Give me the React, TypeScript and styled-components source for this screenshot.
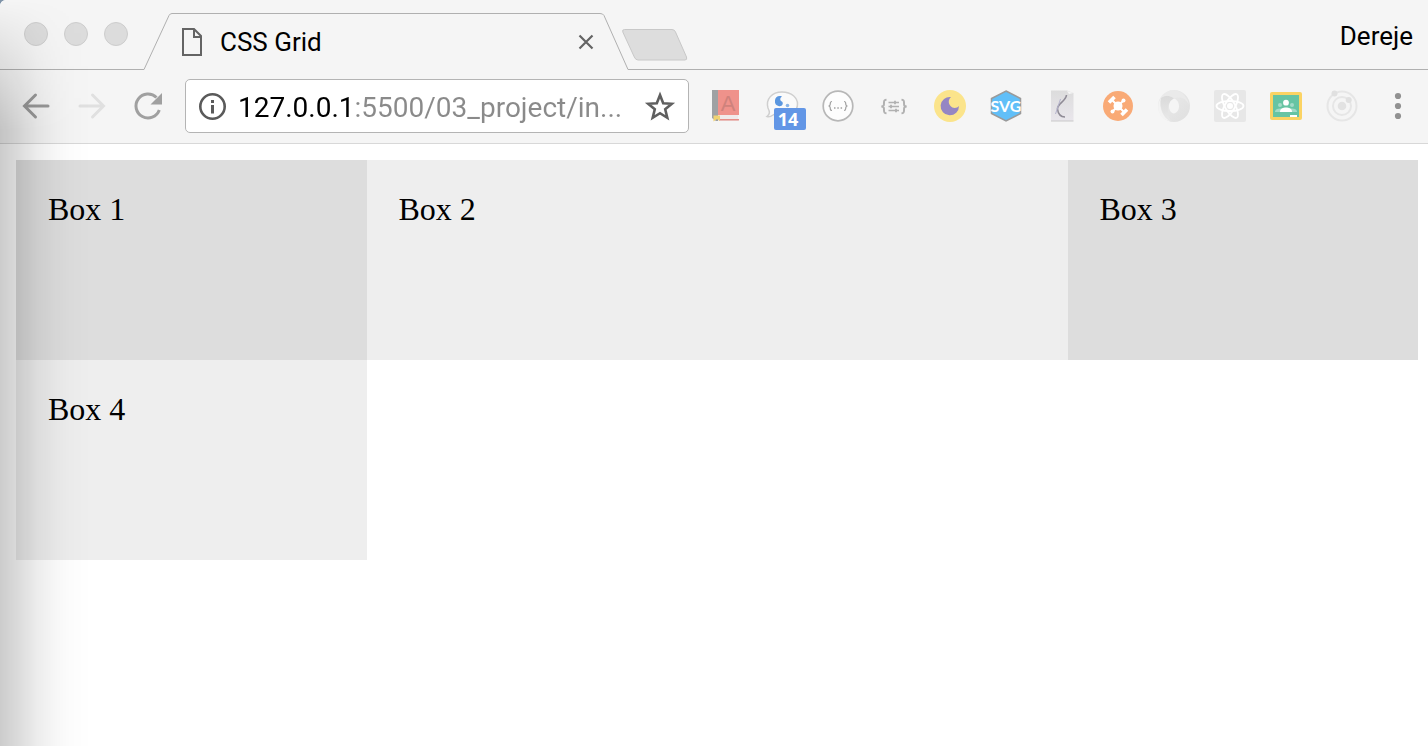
import React, { useState } from "react";
import styled, { createGlobalStyle } from "styled-components";

const GlobalStyle = createGlobalStyle`
  *, *::before, *::after { box-sizing: border-box; }
  body {
    margin: 0;
    background: #7f93a8;
  }
  button {
    border: 0;
    padding: 0;
    background: none;
    font: inherit;
    color: inherit;
  }
  svg { display: block; overflow: visible; }
`;

const uiFont = `Roboto, "Liberation Sans", sans-serif`;

const Window = styled.div`
  position: relative;
  display: flex;
  flex-direction: column;
  min-height: 100vh;
  overflow: hidden;
  border-top-left-radius: 6px;
  background: #fff;
`;

const EdgeShade = styled.div`
  position: absolute;
  inset: 0 auto 0 0;
  width: 92px;
  pointer-events: none;
  background: linear-gradient(
    to right,
    rgba(0, 0, 0, 0.2) 0,
    rgba(0, 0, 0, 0.15) 16px,
    rgba(0, 0, 0, 0.07) 38px,
    rgba(0, 0, 0, 0.03) 56px,
    rgba(0, 0, 0, 0.01) 70px,
    transparent 92px
  );
  mask-image: linear-gradient(to bottom, transparent 0, rgba(0, 0, 0, 0.3) 40px, #000 130px);
`;

const TabStrip = styled.header`
  display: flex;
  align-items: flex-end;
  height: 70px;
  background: #f5f5f5;
  font-family: ${uiFont};
  font-size: 26px;
  line-height: 32px;
  color: #000;
`;

const WindowControls = styled.div`
  display: flex;
  gap: 16px;
  width: 144px;
  height: 70px;
  padding: 22px 0 0 24px;
  border-bottom: 1px solid #b0b0b0;
`;

const ControlDot = styled.button`
  width: 24px;
  height: 24px;
  border: 1px solid #cdcdcd;
  border-radius: 50%;
  background: #dcdcdc;
`;

const Tab = styled.div`
  display: flex;
  height: 57px;
`;

const TabBody = styled.div`
  display: flex;
  align-items: center;
  width: 428px;
  padding: 0 6px 0 10px;
  border-top: 1px solid #b0b0b0;
`;

const TabTitle = styled.span`
  flex: 1;
  padding-left: 18px;
`;

const StripRest = styled.div`
  display: flex;
  flex: 1;
  align-items: center;
  justify-content: space-between;
  height: 70px;
  padding: 2px 15px 0 0;
  border-bottom: 1px solid #b0b0b0;
`;

const NewTab = styled.button`
  width: 66px;
  height: 32px;
  margin: 18px 0 0 -6px;
`;

const Toolbar = styled.nav`
  display: flex;
  align-items: center;
  height: 74px;
  padding: 0 2px 1px 8px;
  border-bottom: 1px solid #d8d8d8;
  background: #f5f5f5;
`;

const ToolButton = styled.button`
  position: relative;
  display: flex;
  align-items: center;
  justify-content: center;
  flex: none;
  width: 56px;
  height: 56px;
`;

const AddressBar = styled.form`
  display: flex;
  align-items: center;
  flex: 1;
  min-width: 0;
  height: 54px;
  margin: 0 9px;
  padding: 0 12px;
  border: 1px solid #b4b4b4;
  border-radius: 5px;
  background: #fff;
`;

const AddressInput = styled.input`
  flex: 1;
  min-width: 0;
  height: 40px;
  margin: 0 8px 0 12px;
  padding: 2px 0 0;
  border: 0;
  outline: 0;
  font-family: ${uiFont};
  font-size: 28px;
  color: #000;
  background: linear-gradient(to right, #000 115px, #8a8a8a 115px);
  background-clip: text;
  -webkit-text-fill-color: transparent;
`;

const Badge = styled.span`
  position: absolute;
  left: 20px;
  top: 30px;
  width: 32px;
  height: 22px;
  padding-right: 4px;
  border-radius: 2px;
  background: #6296e6;
  color: #fff;
  font: 700 18px/22px "Open Sans", sans-serif;
  text-align: center;
`;

const Grid = styled.main`
  display: grid;
  grid-template-columns: 1fr 2fr 1fr;
  grid-auto-rows: 200px;
  padding: 16px 10px 16px 16px;
`;

const Box = styled.div<{ $dark?: boolean }>`
  padding: 32px;
  background: ${({ $dark }) => ($dark ? "#ddd" : "#eee")};
  font: 32px/34px "Liberation Serif", serif;
  color: #000;
`;

const Icon = ({ children }: { children: React.ReactNode }) => (
  <svg width="32" height="32" viewBox="0 0 32 32" fill="none" aria-hidden="true">
    {children}
  </svg>
);

const BackIcon = () => (
  <Icon>
    <path d="M28 16H5M15.500 5L4.500 16L15.500 27" stroke="#999" strokeWidth="3" strokeLinecap="round" />
  </Icon>
);

const ForwardIcon = () => (
  <Icon>
    <path d="M4 16H27M16.500 5L27.500 16L16.500 27" stroke="#e0e0e0" strokeWidth="3" strokeLinecap="round" />
  </Icon>
);

const ReloadIcon = () => (
  <Icon>
    <path d="M27.300 20A12 12 0 1 1 24.500 7.500" stroke="#a0a0a0" strokeWidth="3" />
    <path d="M30 3V14.500H18.500Z" fill="#a0a0a0" />
  </Icon>
);

const InfoIcon = () => (
  <svg width="28" height="28" viewBox="0 0 28 28" fill="none" aria-hidden="true">
    <circle cx="14.500" cy="14.500" r="12.200" stroke="#5a5a5a" strokeWidth="2.600" />
    <path d="M13 8h3v3h-3zM13 13h3v8.500h-3z" fill="#5a5a5a" />
  </svg>
);

const StarIcon = () => (
  <svg width="32" height="32" viewBox="0 0 32 32" fill="none" aria-hidden="true">
    <path
      d="M16 5L19.200 13.200L27.800 13.800L21.200 19.300L23.300 27.800L16 23.200L8.700 27.800L10.800 19.300L4.200 13.800L12.800 13.200Z"
      stroke="#5f5f5f"
      strokeWidth="2.600"
    />
  </svg>
);

const DictionaryIcon = () => (
  <Icon>
    <path d="M2 0H8V31H6L2 28Z" fill="#9fa1a3" />
    <path d="M8 0H29V25H8Z" fill="#ef928b" />
    <path d="M8 25H28V31H8Z" fill="#f0eaea" />
    <path d="M9 29H29V30.500H9Z" fill="#e58f89" />
    <path d="M3.500 25.500H10V31L7 29L3.500 31.500Z" fill="#f0d272" />
    <text x="18" y="21" textAnchor="middle" fontFamily="Liberation Sans, sans-serif" fontSize="22" fill="#cf827c">A</text>
  </Icon>
);

const ChatIcon = () => (
  <Icon>
    <path d="M1 26.500C4 24 4 22 2 18C-.5 9 6 2 16 2C26 2 31.500 8 31.500 14C31.500 22 24 25 18 25C12 25 9 23 7 25C5 26.500 3 27 1 26.500Z" fill="#fafafa" stroke="#cfcfcf" strokeWidth="1.500" />
    <path d="M9 10.500C9 7 12.500 5 16 6.500C13.500 8 14 11 16 11.500C18 13.500 16 17 12.500 16C10 15.500 8.500 13.500 9 10.500Z" fill="#5b97e0" />
    <circle cx="21.500" cy="15.500" r="1.800" fill="#8bb4e6" />
  </Icon>
);

const JsonIcon = () => (
  <Icon>
    <circle cx="16" cy="16" r="14.800" fill="#fdfdfd" stroke="#b7b7b7" strokeWidth="1.700" />
    <path d="M10 11.500C8.300 11.500 8.300 12 8.300 13.500C8.300 15.500 8 16 6.500 16C8 16 8.300 16.500 8.300 18.500C8.300 20 8.300 20.500 10 20.500M22 11.500C23.700 11.500 23.700 12 23.700 13.500C23.700 15.500 24 16 25.500 16C24 16 23.700 16.500 23.700 18.500C23.700 20 23.700 20.500 22 20.500" stroke="#a2a2a2" strokeWidth="1.200" />
    <path d="M12 17.200h1.500v1.500H12zM15.300 17.200h1.500v1.500h-1.500zM18.600 17.200h1.500v1.500h-1.500z" fill="#a2a2a2" />
  </Icon>
);

const BracesIcon = () => (
  <Icon>
    <path d="M8.500 9.800C6.300 9.800 6 10.500 6 12.500C6 15.500 6 16 3.500 16.500C6 17 6 17.500 6 20.500C6 22.500 6.300 23.200 8.500 23.200M23.500 9.800C25.700 9.800 26 10.500 26 12.500C26 15.500 26 16 28.500 16.500C26 17 26 17.500 26 20.500C26 22.500 25.700 23.200 23.500 23.200" stroke="#b1b1b1" strokeWidth="2" />
    <path d="M10.500 12.500H21M10.500 16.500H21M10.500 20.500H21" stroke="#b1b1b1" strokeWidth="1.500" />
    <path d="M17 10.800v3.400M13 14.800v3.400M18 18.800v3.400" stroke="#b1b1b1" strokeWidth="1.800" />
  </Icon>
);

const MoonIcon = () => (
  <Icon>
    <circle cx="16" cy="16" r="16" fill="#fbe48b" />
    <path d="M17 7A9.200 9.200 0 1 0 25 16C23 18.500 18.500 18.500 16.500 16C14 13 14.300 9.500 17 7Z" fill="#9586c3" />
  </Icon>
);

const SvgIcon = () => (
  <Icon>
    <path d="M16 1L30.500 8.500V23.500L16 31L1.500 23.500V8.500Z" fill="#61bff8" stroke="#9a9a9a" strokeWidth="1.500" />
    <text x="16" y="22" textAnchor="middle" fontFamily="Lato, sans-serif" fontSize="16" fontWeight="700" fill="#fff">SVG</text>
  </Icon>
);

const PenPageIcon = () => (
  <Icon>
    <defs>
      <linearGradient id="sheet" x1="0" y1="0" x2="0" y2="1">
        <stop offset="0" stopColor="#dcdcdc" />
        <stop offset="1" stopColor="#e9e6ec" />
      </linearGradient>
    </defs>
    <path d="M5 0.500H21L27.500 3V31H5Z" fill="url(#sheet)" />
    <path d="M5 31H27.500" stroke="#c9c9c9" />
    <path d="M21 1L23 4L27.500 3" fill="#f5f5f5" />
    <path d="M20.500 5C20 11 11 14 11.500 19C12 23 14 27 19 27" stroke="#8f8b96" strokeWidth="1.600" />
    <path d="M14.500 9L9.500 24" stroke="#b4b2cc" strokeWidth="1" />
  </Icon>
);

const DroneIcon = () => (
  <Icon>
    <circle cx="16" cy="16" r="15" fill="#f9aa76" />
    <path d="M10.500 10.500L21.500 21.500M21.500 10.500L10.500 21.500" stroke="#fff" strokeWidth="2" />
    <circle cx="16" cy="16" r="4.500" fill="#fff" />
    <circle cx="21.500" cy="10.500" r="2" fill="#fff" />
    <circle cx="10.500" cy="21.500" r="2" fill="#fff" />
    <path d="M7 12.500L12.500 7M19.500 25L25 19.500" stroke="#fff" strokeWidth="3.600" />
  </Icon>
);

const SwirlIcon = () => (
  <Icon>
    <defs>
      <linearGradient id="swirlRing" x1="0" y1="0" x2="1" y2="1">
        <stop offset="0" stopColor="#ececec" />
        <stop offset="1" stopColor="#dfdfdf" />
      </linearGradient>
      <linearGradient id="swirlFold" x1="0" y1="0" x2="0" y2="1">
        <stop offset="0" stopColor="#dadada" />
        <stop offset="1" stopColor="#e9e9e9" />
      </linearGradient>
    </defs>
    <path
      d="M16 0A16 16 0 0 1 16 32A16 16 0 0 1 16 0ZM16 8.500C12.500 9.500 11 13 11 16.500C11 20 13 23 16 23.500C19.500 22.500 21 19.500 21 16C21 12.500 19 9.500 16 8.500Z"
      fillRule="evenodd"
      fill="url(#swirlRing)"
    />
    <path d="M3 8C.5 18 5 27 12 31C3 30-1 22 .5 13Z" fill="#f3f3f3" />
    <path d="M3 8C1 19 6 27 13 31C9 25 8 12 16 8.500C12 5 7 5 3 8Z" fill="url(#swirlFold)" />
    <path d="M16 8.500C12 5 7 5 3 8C6 3 11 0 16 0C24 1 30 8 31 15C28 8 22 6 16 8.500Z" fill="#eaeaea" />
  </Icon>
);

const AtomIcon = () => (
  <Icon>
    <rect width="32" height="32" rx="2" fill="#e7e7e7" />
    <circle cx="16" cy="16" r="3" fill="#fff" />
    <g stroke="#fff" strokeWidth="1.800">
      <ellipse cx="16" cy="16" rx="13.500" ry="5" />
      <ellipse cx="16" cy="16" rx="13.500" ry="5" transform="rotate(60 16 16)" />
      <ellipse cx="16" cy="16" rx="13.500" ry="5" transform="rotate(120 16 16)" />
    </g>
  </Icon>
);

const ClassroomIcon = () => (
  <Icon>
    <rect y="2" width="32" height="28" rx="2" fill="#fbd363" />
    <path d="M3 5H29V27H3Z" fill="#67c4a3" />
    <circle cx="10" cy="15" r="2" fill="#a3dbc7" />
    <circle cx="22" cy="15" r="2" fill="#a3dbc7" />
    <path d="M5 22C5 19 8 18.500 11 18.500H21C24 18.500 27 19 27 22Z" fill="#a3dbc7" />
    <circle cx="16" cy="12.700" r="2.900" fill="#fff" />
    <path d="M10 22C10 18.500 13 17.500 16 17.500S22 18.500 22 22Z" fill="#fff" />
    <path d="M20 25H27V27H20Z" fill="#fff" />
  </Icon>
);

const OrbitIcon = () => (
  <Icon>
    <g stroke="#e6e6e6" strokeWidth="2">
      <circle cx="16" cy="16" r="14.500" />
      <circle cx="16" cy="16" r="9" />
    </g>
    <circle cx="16" cy="16" r="4.300" fill="#e2e2e2" />
    <circle cx="8.500" cy="3.500" r="3" fill="#e0e0e0" />
    <circle cx="22.700" cy="10" r="3" fill="#e0e0e0" />
  </Icon>
);

const MenuIcon = () => (
  <Icon>
    <g fill="#919191">
      <circle cx="16" cy="6" r="3.100" />
      <circle cx="16" cy="16" r="3.100" />
      <circle cx="16" cy="26" r="3.100" />
    </g>
  </Icon>
);

const extensions = [
  { name: "Dictionary", icon: <DictionaryIcon /> },
  { name: "Messages", icon: <ChatIcon />, badge: "14" },
  { name: "JSON viewer", icon: <JsonIcon /> },
  { name: "JSON settings", icon: <BracesIcon /> },
  { name: "Night mode", icon: <MoonIcon /> },
  { name: "Vector grabber", icon: <SvgIcon /> },
  { name: "Page pen", icon: <PenPageIcon /> },
  { name: "Drone", icon: <DroneIcon /> },
  { name: "Swirl", icon: <SwirlIcon /> },
  { name: "React tools", icon: <AtomIcon /> },
  { name: "Classroom", icon: <ClassroomIcon /> },
  { name: "Orbit", icon: <OrbitIcon /> },
  { name: "Menu", icon: <MenuIcon /> },
];

const boxes = ["Box 1", "Box 2", "Box 3", "Box 4"];

export default function App() {
  const [address, setAddress] = useState("127.0.0.1:5500/03_project/in...");

  return (
    <>
      <GlobalStyle />
      <Window>
        <TabStrip>
          <WindowControls>
            <ControlDot aria-label="Close window" />
            <ControlDot aria-label="Minimize window" />
            <ControlDot aria-label="Zoom window" />
          </WindowControls>
          <Tab>
            <svg width="28" height="57" viewBox="0 0 28 57" fill="none" aria-hidden="true">
              <path d="M0 56.500L25 2.500Q26 .5 28 .5" stroke="#b0b0b0" />
            </svg>
            <TabBody>
              <svg width="20" height="28" viewBox="0 0 20 28" fill="none" aria-hidden="true">
                <path d="M1 1H12L19 8V27H1ZM12 1V9H19" stroke="#646464" strokeWidth="2" />
              </svg>
              <TabTitle>CSS Grid</TabTitle>
              <button aria-label="Close tab">
                <svg width="16" height="16" viewBox="0 0 16 16" aria-hidden="true">
                  <path d="M1.500 1.500L14.500 14.500M14.500 1.500L1.500 14.500" stroke="#646464" strokeWidth="2.200" />
                </svg>
              </button>
            </TabBody>
            <svg width="28" height="57" viewBox="0 0 28 57" fill="none" aria-hidden="true">
              <path d="M0 .5Q3 .5 4 2.500L28 56.500" stroke="#b0b0b0" />
            </svg>
          </Tab>
          <StripRest>
            <NewTab aria-label="New tab">
              <svg width="66" height="32" viewBox="0 0 66 32" aria-hidden="true">
                <path d="M2.500 .5H50Q52.500 .5 53.500 3L64.500 28Q65.500 31 63 31H16Q13.500 31 12.300 28L.8 3Q0 .5 2.500 .5Z" fill="#ddd" stroke="#c8c8c8" />
              </svg>
            </NewTab>
            <button>Dereje</button>
          </StripRest>
        </TabStrip>
        <Toolbar aria-label="Browser toolbar">
          <ToolButton aria-label="Back"><BackIcon /></ToolButton>
          <ToolButton aria-label="Forward"><ForwardIcon /></ToolButton>
          <ToolButton aria-label="Reload"><ReloadIcon /></ToolButton>
          <AddressBar onSubmit={(e) => e.preventDefault()}>
            <InfoIcon />
            <AddressInput
              aria-label="Address"
              value={address}
              onChange={(e) => setAddress(e.target.value)}
            />
            <button type="button" aria-label="Bookmark this page"><StarIcon /></button>
          </AddressBar>
          {extensions.map(({ name, icon, badge }) => (
            <ToolButton key={name} aria-label={name}>
              {icon}
              {badge && <Badge>{badge}</Badge>}
            </ToolButton>
          ))}
        </Toolbar>
        <Grid>
          {boxes.map((label, i) => (
            <Box key={label} $dark={i % 2 === 0}>{label}</Box>
          ))}
        </Grid>
        <EdgeShade />
      </Window>
    </>
  );
}
